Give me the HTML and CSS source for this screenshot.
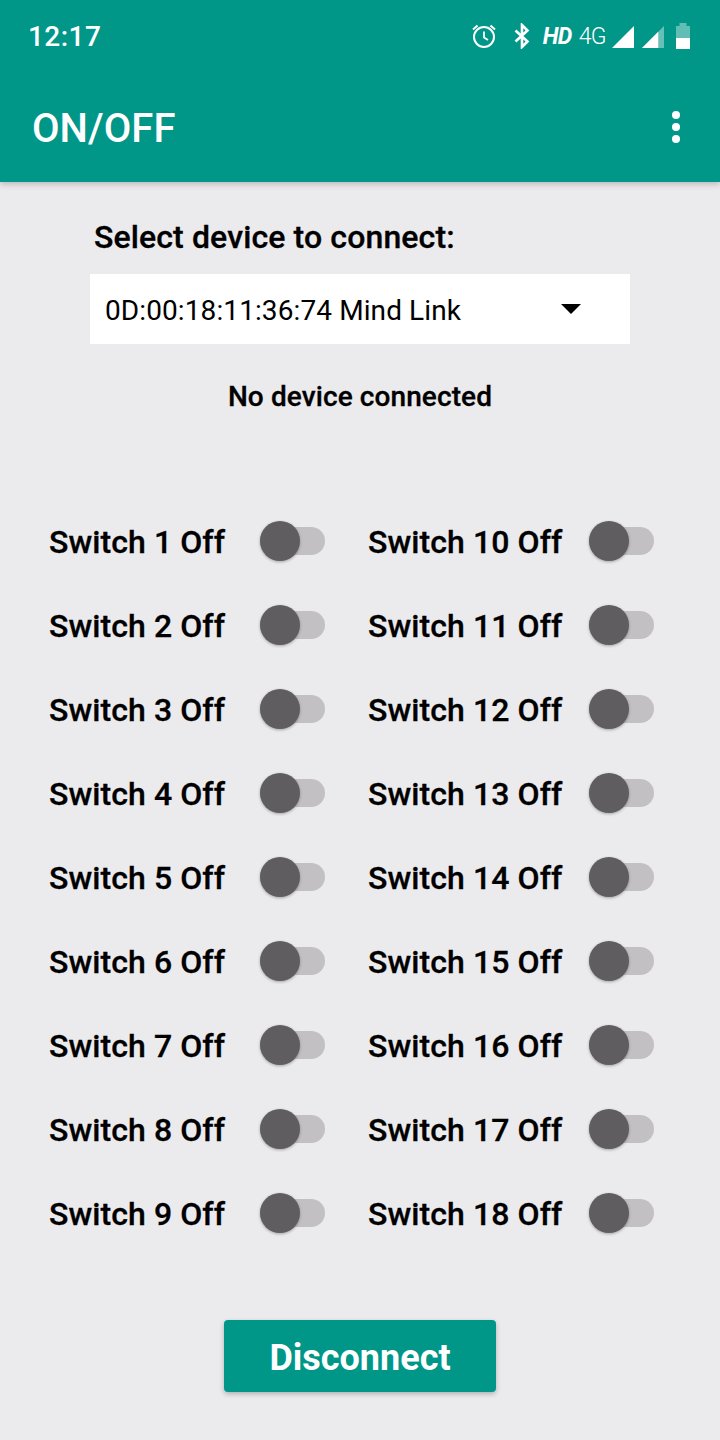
FILE: index.html
```html
<!DOCTYPE html>
<html lang="en">
<head>
<meta charset="utf-8">
<title>ON/OFF</title>
<link rel="stylesheet" href="styles.css">
</head>
<body>
<header class="appbar">
  <div class="status">
    <span class="time">12:17</span>
    <div class="status-icons">
      <svg class="ic-alarm" width="26" height="26" viewBox="0 0 26 26" fill="none" stroke="#fff"><circle cx="13" cy="14" r="10" stroke-width="2"/><path d="M13 8.500V14.500L17 17" stroke-width="1.800"/><path d="M2 6.500L6.500 2.500M24 6.500L19.500 2.500" stroke-width="2"/></svg>
      <svg class="ic-bt" width="18" height="26" viewBox="0 0 18 26" fill="none" stroke="#fff" stroke-width="2.600"><path d="M2.500 7.500L14.500 18.500L9 24V2L14.500 7.500L2.500 18.500"/></svg>
      <span class="hd">HD</span>
      <span class="lte">4G</span>
      <svg class="ic-sig" width="22" height="22" viewBox="0 0 23 23"><path d="M0 23L23 0V23Z" fill="#fff"/></svg>
      <svg class="ic-sig2" width="22" height="22" viewBox="0 0 23 23"><path d="M0 23L23 0V23Z" fill="#fff" fill-opacity=".4"/><path d="M0 23L17 6V23Z" fill="#fff"/></svg>
      <svg class="ic-bat" width="14" height="26" viewBox="0 0 14 26"><path d="M0 3H3.500V0H10.500V3H14V15H0Z" fill="#fff" fill-opacity=".38"/><path d="M0 15H14V26H0Z" fill="#fff"/></svg>
    </div>
  </div>
  <div class="toolbar">
    <h1 class="title">ON/OFF</h1>
    <div class="overflow"><i></i><i></i><i></i></div>
  </div>
</header>

<main class="content">
  <div class="device">
    <p class="select-label">Select device to connect:</p>
    <div class="spinner">
      <span>0D:00:18:11:36:74 Mind Link</span>
      <svg width="20" height="10" viewBox="0 0 20 10"><path d="M0 0H20L10 10Z" fill="#000"/></svg>
    </div>
    <p class="conn">No device connected</p>
  </div>

  <div class="grid">
    <div class="col">
      <div class="row"><span class="lbl">Switch 1 Off</span><span class="sw"></span></div>
      <div class="row"><span class="lbl">Switch 2 Off</span><span class="sw"></span></div>
      <div class="row"><span class="lbl">Switch 3 Off</span><span class="sw"></span></div>
      <div class="row"><span class="lbl">Switch 4 Off</span><span class="sw"></span></div>
      <div class="row"><span class="lbl">Switch 5 Off</span><span class="sw"></span></div>
      <div class="row"><span class="lbl">Switch 6 Off</span><span class="sw"></span></div>
      <div class="row"><span class="lbl">Switch 7 Off</span><span class="sw"></span></div>
      <div class="row"><span class="lbl">Switch 8 Off</span><span class="sw"></span></div>
      <div class="row"><span class="lbl">Switch 9 Off</span><span class="sw"></span></div>
    </div>
    <div class="col col-right">
      <div class="row"><span class="lbl">Switch 10 Off</span><span class="sw"></span></div>
      <div class="row"><span class="lbl">Switch 11 Off</span><span class="sw"></span></div>
      <div class="row"><span class="lbl">Switch 12 Off</span><span class="sw"></span></div>
      <div class="row"><span class="lbl">Switch 13 Off</span><span class="sw"></span></div>
      <div class="row"><span class="lbl">Switch 14 Off</span><span class="sw"></span></div>
      <div class="row"><span class="lbl">Switch 15 Off</span><span class="sw"></span></div>
      <div class="row"><span class="lbl">Switch 16 Off</span><span class="sw"></span></div>
      <div class="row"><span class="lbl">Switch 17 Off</span><span class="sw"></span></div>
      <div class="row"><span class="lbl">Switch 18 Off</span><span class="sw"></span></div>
    </div>
  </div>

  <div class="actions"><button class="disconnect">Disconnect</button></div>
</main>
</body>
</html>
```
FILE: styles.css
```css
* { box-sizing: border-box; }
html, body { margin: 0; padding: 0; }
body {
  width: 720px;
  height: 1440px;
  overflow: hidden;
  background: #ebeaec;
  font-family: Roboto, sans-serif;
  color: #000;
}
.appbar {
  height: 182px;
  background: #009688;
  color: #fff;
  box-shadow: 0 2px 6px rgba(0,0,0,.22);
  position: relative;
}
.status {
  height: 72px;
  display: flex;
  align-items: center;
  justify-content: space-between;
  padding: 0 30px 0 28px;
}
.time { font-size: 28px; font-weight: 500; letter-spacing: .45px; }
.status-icons { display: flex; align-items: center; }
.ic-alarm { margin-right: 16px; }
.ic-bt { margin-right: 12px; }
.hd { font-size: 23px; font-weight: 700; font-style: italic; margin-right: 7px; letter-spacing: -.6px; }
.lte { font-size: 23px; font-weight: 300; margin-right: 6px; letter-spacing: -.6px; }
.ic-sig { margin: 2px 8px 0 0; }
.ic-sig2 { margin: 2px 12px 0 0; }
.toolbar {
  height: 110px;
  display: flex;
  align-items: center;
  justify-content: space-between;
  padding: 0 40px 0 32px;
}
.title { margin: 0 0 -2px 0; font-size: 40px; font-weight: 500; letter-spacing: .05px; }
.overflow { display: flex; flex-direction: column; gap: 4px; }
.overflow i { display: block; width: 8px; height: 8px; border-radius: 50%; background: #fff; }
.content { display: flex; flex-direction: column; }
.device { padding: 0 90px; }
.select-label { margin: 34px 0 0 4px; font-size: 32px; line-height: 42px; font-weight: 500; letter-spacing: .12px; -webkit-text-stroke: .3px #000; }
.spinner {
  margin-top: 16px;
  height: 70px;
  background: #fff;
  display: flex;
  align-items: center;
  justify-content: space-between;
  padding: 2px 49px 0 15px;
  font-size: 28px;
  letter-spacing: .1px;
}
.spinner svg { margin-top: -2px; }
.conn { margin: 35px 0 0; text-align: center; font-size: 28px; line-height: 36px; font-weight: 500; letter-spacing: .1px; -webkit-text-stroke: .3px #000; }
.grid { display: flex; margin-top: 85px; padding-left: 49px; }
.col { width: 319px; display: flex; flex-direction: column; }
.row { height: 84px; display: flex; align-items: center; }
.lbl { font-size: 32px; font-weight: 500; letter-spacing: .08px; -webkit-text-stroke: .3px #000; }
.sw {
  position: relative;
  width: 65px;
  height: 28px;
  border-radius: 14px;
  background: #c2c0c3;
  margin: 0 0 2px 35px;
}
.sw::after {
  content: "";
  position: absolute;
  left: 0;
  top: -6px;
  width: 40px;
  height: 40px;
  border-radius: 50%;
  background: #5f5d60;
  box-shadow: 0 1px 3px rgba(0,0,0,.3);
}
.col-right .sw { margin-left: 27px; }
.actions { display: flex; justify-content: center; margin-top: 64px; }
.disconnect {
  width: 272px;
  height: 72px;
  background: #009688;
  color: #fff;
  border: 0;
  border-radius: 4px;
  padding: 4px 0 0;
  font-family: Roboto, sans-serif;
  font-size: 36px;
  font-weight: 700;
  box-shadow: 0 2px 5px rgba(0,0,0,.25);
}
```
